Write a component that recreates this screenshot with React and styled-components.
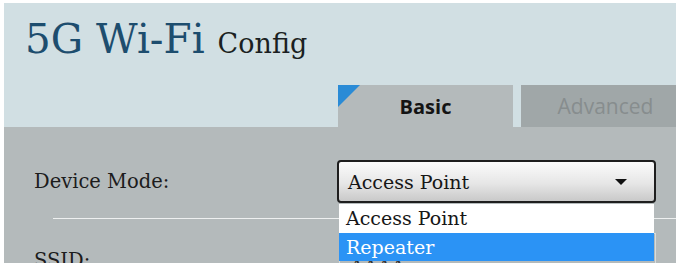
import React from "react";
import styled, { createGlobalStyle } from "styled-components";

const GlobalStyle = createGlobalStyle`
  html, body {
    margin: 0;
    background: #ffffff;
    overflow: hidden;
  }
`;

const Frame = styled.div`
  padding: 3px 8px 0 4px;
  width: 684px;
  height: 271px;
  box-sizing: border-box;
`;

const Panel = styled.div`
  width: 672px;
  height: 260px;
  display: flex;
  flex-direction: column;
  overflow: hidden;
`;

const Header = styled.div`
  background: #d1dfe3;
  height: 124px;
  flex-shrink: 0;
  display: flex;
  flex-direction: column;
  justify-content: space-between;
`;

const Title = styled.h1`
  margin: 0;
  padding: 13px 0 0 21px;
  font-family: "DejaVu Serif", Georgia, serif;
  font-weight: normal;
  font-size: 40.5px;
  line-height: 46px;
  color: #1d4d6e;
  small {
    font-size: 27px;
    color: #1b1f22;
    margin-left: 13px;
  }
`;

const TabRow = styled.div`
  display: flex;
  justify-content: flex-end;
  gap: 8px;
`;

const Tab = styled.div`
  position: relative;
  width: ${(p) => p.$width}px;
  height: 42px;
  display: flex;
  align-items: center;
  justify-content: center;
  font-family: "Open Sans", sans-serif;
  font-size: ${(p) => (p.$active ? "20px" : "21px")};
  font-weight: ${(p) => (p.$active ? 700 : 400)};
  color: ${(p) => (p.$active ? "#141414" : "#878d8e")};
  background: ${(p) => (p.$active ? "#b4babb" : "#a0a7a8")};
  padding-left: ${(p) => (p.$active ? "0" : "14px")};
  box-sizing: border-box;
  &::before {
    content: "";
    display: ${(p) => (p.$active ? "block" : "none")};
    position: absolute;
    top: 0;
    left: 0;
    border-top: 22px solid #2a8bd6;
    border-right: 22px solid transparent;
  }
`;

const Content = styled.div`
  flex: 1;
  background: #b4babb;
  padding: 33px 0 0 30px;
`;

const FieldRow = styled.div`
  display: grid;
  grid-template-columns: 303px 319px;
  align-items: center;
`;

const Label = styled.label`
  font-family: "DejaVu Serif", Georgia, serif;
  font-size: 19.5px;
  color: #1c1c1c;
`;

const SelectWrap = styled.div`
  position: relative;
`;

const SelectBox = styled.div`
  height: 43px;
  box-sizing: border-box;
  border: 2px solid #1e1e1e;
  border-radius: 4px;
  background: linear-gradient(#fbfbfb, #e6e6e6 55%, #c9c9c9);
  display: flex;
  align-items: center;
  justify-content: space-between;
  padding: 0 27px 0 9px;
  font-family: "DejaVu Serif", Georgia, serif;
  font-size: 19px;
  color: #161616;
`;

const Arrow = styled.span`
  width: 0;
  height: 0;
  border-left: 6px solid transparent;
  border-right: 6px solid transparent;
  border-top: 6px solid #111;
`;

const OptionList = styled.ul`
  position: absolute;
  z-index: 2;
  top: 100%;
  left: 2px;
  right: 2px;
  margin: 1px 0 0;
  padding: 0;
  list-style: none;
  background: #ffffff;
`;

const Option = styled.li`
  height: 28.5px;
  display: flex;
  align-items: center;
  padding-left: 7px;
  font-family: "DejaVu Serif", Georgia, serif;
  font-size: 19px;
  color: ${(p) => (p.$selected ? "#ffffff" : "#161616")};
  background: ${(p) => (p.$selected ? "#2b93f5" : "#ffffff")};
`;

const Divider = styled.div`
  height: 1px;
  background: #eef0f0;
  margin: 15px 0 0 19px;
`;

const SsidRow = styled(FieldRow)`
  margin-top: 14px;
  align-items: start;
`;

const SsidLabel = styled(Label)`
  padding-top: 16px;
`;

const TextInput = styled.div`
  height: 40px;
  margin-left: 2px;
  box-sizing: border-box;
  border: 1px solid #d8dcdc;
  background: #b4babb;
  padding: 21px 0 0 10px;
  font-family: "DejaVu Serif", Georgia, serif;
  font-size: 19px;
  color: #333;
`;

export default function App() {
  return (
    <>
      <GlobalStyle />
      <Frame>
        <Panel>
          <Header>
            <Title>
              5G Wi-Fi<small>Config</small>
            </Title>
            <TabRow>
              <Tab $active $width={175}>
                Basic
              </Tab>
              <Tab $width={155}>Advanced</Tab>
            </TabRow>
          </Header>
          <Content>
            <FieldRow>
              <Label>Device Mode:</Label>
              <SelectWrap>
                <SelectBox>
                  Access Point
                  <Arrow />
                </SelectBox>
                <OptionList>
                  <Option>Access Point</Option>
                  <Option $selected>Repeater</Option>
                </OptionList>
              </SelectWrap>
            </FieldRow>
            <Divider />
            <SsidRow>
              <SsidLabel>SSID:</SsidLabel>
              <TextInput>AAAA</TextInput>
            </SsidRow>
          </Content>
        </Panel>
      </Frame>
    </>
  );
}
